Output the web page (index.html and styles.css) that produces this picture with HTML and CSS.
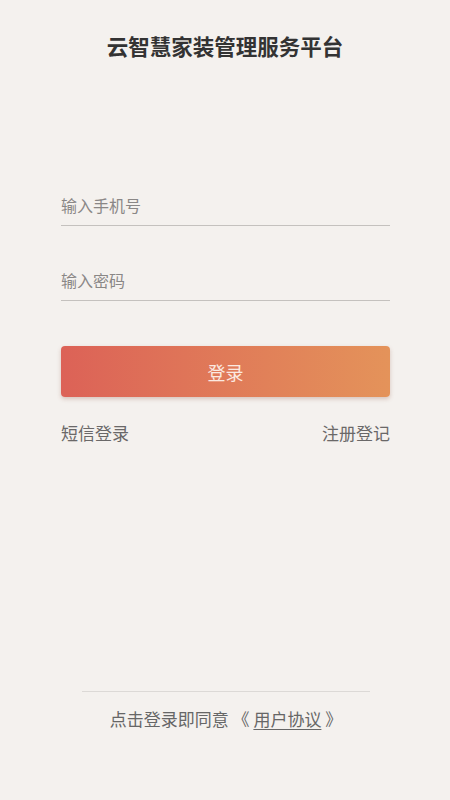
FILE: index.html
```html
<!DOCTYPE html>
<html lang="zh">
<head>
<meta charset="utf-8">
<title>云智慧家装管理服务平台</title>
<link rel="stylesheet" href="styles.css">
</head>
<body>
<div class="page">
  <h1 class="title">云智慧家装管理服务平台</h1>
  <form class="form">
    <div class="field"><input class="input" type="text" placeholder="输入手机号"></div>
    <div class="field"><input class="input" type="password" placeholder="输入密码"></div>
    <button class="btn" type="button">登录</button>
    <div class="links">
      <span class="link">短信登录</span>
      <span class="link">注册登记</span>
    </div>
  </form>
  <div class="spacer"></div>
  <footer class="footer">
    <span>点击登录即同意 《 <span class="agree">用户协议</span> 》</span>
  </footer>
</div>
</body>
</html>
```
FILE: styles.css
```css
html, body {
  margin: 0;
  padding: 0;
  background: #f4f1ee;
}
body {
  font-family: "Noto Sans CJK SC", "Noto Sans", sans-serif;
  color: #333;
}
.page {
  height: 800px;
  display: flex;
  flex-direction: column;
  box-sizing: border-box;
}
.title {
  margin: 30px 0 0;
  font-size: 21.5px;
  line-height: 32px;
  font-weight: 700;
  text-align: center;
  color: #333;
}
.form {
  display: flex;
  flex-direction: column;
  padding: 0 60px 0 61px;
  margin-top: 123px;
}
.field {
  border-bottom: 1px solid #c4c1be;
  height: 40px;
  display: flex;
  align-items: center;
  margin-bottom: 34px;
}
.field + .field {
  margin-bottom: 45px;
}
.input {
  border: none;
  background: transparent;
  outline: none;
  padding: 0;
  width: 100%;
  font-family: inherit;
  font-size: 16px;
  color: #333;
}
.input::placeholder {
  color: #8a8786;
}
.btn {
  height: 51px;
  border: none;
  border-radius: 4px;
  background: linear-gradient(90deg, #dc6257 0%, #e4935a 100%);
  box-shadow: 0 2px 4px rgba(150, 90, 70, 0.3);
  color: #fbe9e0;
  font-family: inherit;
  font-size: 18px;
  padding: 0;
}
.links {
  display: flex;
  justify-content: space-between;
  margin-top: 24px;
  font-size: 17px;
  line-height: 24px;
  color: #6a6868;
}
.spacer {
  flex: 1;
}
.footer {
  margin: 0 80px 0 82px;
  border-top: 1px solid #dcd9d6;
  padding-top: 15px;
  height: 109px;
  box-sizing: border-box;
  text-align: center;
  font-size: 17px;
  line-height: 24px;
  color: #666;
}
.agree {
  text-decoration: underline;
  text-underline-offset: 3px;
}
```
